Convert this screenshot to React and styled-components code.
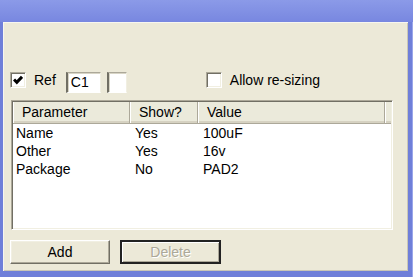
import React from 'react';
import styled, { createGlobalStyle } from 'styled-components';

const GlobalStyle = createGlobalStyle`
  body {
    margin: 0;
    background: #ffffff;
    font-family: "Liberation Sans", Arial, sans-serif;
  }
`;

const rows = [
  { name: 'Name', show: 'Yes', value: '100uF' },
  { name: 'Other', show: 'Yes', value: '16v' },
  { name: 'Package', show: 'No', value: 'PAD2' },
];

const columns = '117px 68px 187px 1fr';

const CheckMark = () => (
  <svg width="10" height="10" viewBox="0 0 10 10">
    <path d="M1 4.5 L3.8 7.3 L9 1.8" fill="none" stroke="#000" strokeWidth="3" />
  </svg>
);

const App = () => {
  return (
    <>
      <GlobalStyle />
      <Window>
        <TitleBar />
        <Frame>
          <Client>
            <TopRow>
              <CheckBox>
                <CheckMark />
              </CheckBox>
              <Label>Ref</Label>
              <TextField $width={35} $gap={10}>C1</TextField>
              <TextField $width={20} $gap={6} />
              <CheckBox $gap={79} />
              <Label>Allow re-sizing</Label>
            </TopRow>

            <ListView>
              <Header>
                <HeaderCell>Parameter</HeaderCell>
                <HeaderCell>Show?</HeaderCell>
                <HeaderCell>Value</HeaderCell>
                <HeaderCell $last />
              </Header>
              {rows.map((row) => (
                <Row key={row.name}>
                  <Cell $pad={3}>{row.name}</Cell>
                  <Cell>{row.show}</Cell>
                  <Cell>{row.value}</Cell>
                </Row>
              ))}
            </ListView>

            <ButtonRow>
              <Button>Add</Button>
              <Button $disabled>Delete</Button>
            </ButtonRow>
          </Client>
        </Frame>
      </Window>
    </>
  );
};

const Window = styled.div`
  width: 413px;
  height: 277px;
  display: flex;
  flex-direction: column;
  background: #6f7fd9;
`;

const TitleBar = styled.div`
  height: 22px;
  flex-shrink: 0;
  background: linear-gradient(#8b9ae8, #7887e0);
`;

const Frame = styled.div`
  flex: 1;
  display: flex;
  padding: 0 5px 6px 3px;
  box-shadow: inset -1px 0 0 #9aa6ea;
`;

const Client = styled.div`
  flex: 1;
  display: flex;
  flex-direction: column;
  background: #ece9d8;
  padding: 50px 0 0 7px;
  box-shadow: inset 1px 1px 0 #f7f6ef, inset -1px -1px 0 #c9c6b6;
`;

const TopRow = styled.div`
  display: flex;
  align-items: flex-start;
  height: 21px;
  font-size: 14px;
`;

const CheckBox = styled.span`
  width: 16px;
  height: 16px;
  box-sizing: border-box;
  margin-left: ${(p) => p.$gap || 0}px;
  margin-right: 8px;
  display: flex;
  align-items: center;
  justify-content: center;
  background: #ffffff;
  border-top: 1px solid #aca899;
  border-left: 1px solid #aca899;
  border-right: 1px solid #ffffff;
  border-bottom: 1px solid #ffffff;
  box-shadow: inset 1px 1px 0 #716f64, inset -1px -1px 0 #f1efe2;
`;

const Label = styled.span`
  line-height: 16px;
  color: #000;
  white-space: nowrap;
`;

const TextField = styled.div`
  width: ${(p) => p.$width}px;
  height: 21px;
  box-sizing: border-box;
  margin-left: ${(p) => p.$gap}px;
  padding-left: 3px;
  line-height: 18px;
  font-size: 14px;
  background: #ffffff;
  border-top: 1px solid #aca899;
  border-left: 2px solid #716f64;
  border-right: 1px solid #f1efe2;
  border-bottom: 1px solid #ffffff;
  box-shadow: inset 1px 1px 0 #d8d5c6;
`;

const ListView = styled.div`
  width: 382px;
  height: 130px;
  box-sizing: border-box;
  margin: 7px 0 0 1px;
  background: #ffffff;
  border-top: 1px solid #aca899;
  border-left: 1px solid #aca899;
  border-right: 1px solid #ffffff;
  border-bottom: 1px solid #ffffff;
  box-shadow: inset 1px 1px 0 #716f64, inset -1px -1px 0 #f1efe2;
  padding: 1px;
  font-size: 14px;
  overflow: hidden;
`;

const Header = styled.div`
  display: grid;
  grid-template-columns: ${columns};
  height: 21px;
  background: #ebeadb;
  border-bottom: 1px solid #aca899;
  box-shadow: inset 0 -2px 0 #d6d2c2;
`;

const HeaderCell = styled.div`
  padding-left: ${(p) => (p.$last ? 0 : 8)}px;
  line-height: 21px;
  color: #000;
  border-left: 1px solid #ffffff;
  border-right: ${(p) => (p.$last ? 'none' : '1px solid #aca899')};
`;

const Row = styled.div`
  display: grid;
  grid-template-columns: ${columns};
  height: 18px;
  line-height: 18px;
`;

const Cell = styled.div`
  padding-left: ${(p) => (p.$pad === undefined ? 5 : p.$pad)}px;
  color: #000;
  white-space: nowrap;
`;

const ButtonRow = styled.div`
  display: flex;
  gap: 10px;
  margin-top: 10px;
`;

const Button = styled.div`
  width: ${(p) => (p.$disabled ? 101 : 100)}px;
  height: 24px;
  box-sizing: border-box;
  display: flex;
  align-items: center;
  justify-content: center;
  font-size: 14px;
  background: #ece9d8;
  color: ${(p) => (p.$disabled ? '#aca899' : '#000')};
  text-shadow: ${(p) => (p.$disabled ? '1px 1px 0 #ffffff' : 'none')};
  border: ${(p) => (p.$disabled ? 2 : 1)}px solid;
  border-color: ${(p) =>
    p.$disabled ? '#222 #222 #222 #222' : '#ffffff #716f64 #716f64 #ffffff'};
  box-shadow: ${(p) =>
    p.$disabled
      ? 'inset 1px 1px 0 #ffffff, inset -1px -1px 0 #aca899'
      : 'inset -1px -1px 0 #aca899, inset 1px 1px 0 #f1efe2'};
`;

export default App;
